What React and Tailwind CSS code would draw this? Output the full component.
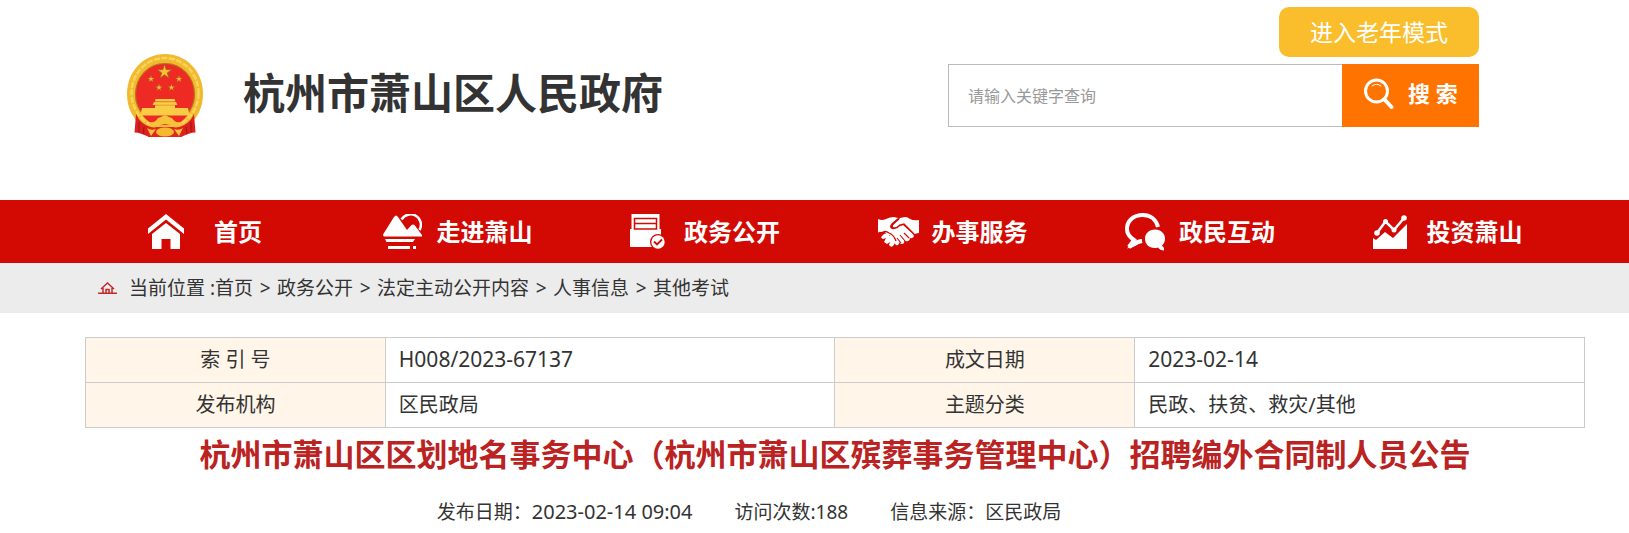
import React from "react";

const navItems = [
  { label: "首页", icon: HomeIcon },
  { label: "走进萧山", icon: MountainIcon },
  { label: "政务公开", icon: DocumentIcon },
  { label: "办事服务", icon: HandshakeIcon },
  { label: "政民互动", icon: ChatIcon },
  { label: "投资萧山", icon: ChartIcon },
];

const crumbs = ["首页", "政务公开", "法定主动公开内容", "人事信息", "其他考试"];

const infoRows = [
  ["索 引 号", "H008/2023-67137", "成文日期", "2023-02-14"],
  ["发布机构", "区民政局", "主题分类", "民政、扶贫、救灾/其他"],
];

function Star({ x, y, r }) {
  return (
    <path
      transform={`translate(${x} ${y}) scale(${r})`}
      d="M0-1 .23-.31H.95L.36.12.59.81 0 .38-.59.81-.36.12-.95-.31H-.23Z"
      fill="#f3c034"
      stroke="#a8641c"
      strokeWidth="0.1"
    />
  );
}

function Emblem() {
  return (
    <svg className="h-[83px] w-[76px] shrink-0" viewBox="0 0 76 83" aria-hidden="true">
      <path d="M38 0C59 0 76 17 76 40c0 13-5 23-13 30-7 6-15 8-25 8s-18-2-25-8C5 63 0 53 0 40 0 17 17 0 38 0Z" fill="#f0b92e" />
      <ellipse cx="38" cy="39" rx="33.5" ry="35" fill="none" stroke="#f9d458" strokeWidth="2.500" strokeDasharray="6 1.500" />
      <path d="M38 9.500c17 0 29.500 14 29.500 31S54 70 38 70 8.500 57.500 8.500 40.500 21 9.500 38 9.500Z" fill="#ee2a25" stroke="#b8741e" strokeWidth="1.200" />
      <Star x={37.500} y={18} r={7.500} />
      <Star x={24} y={25} r={3.600} />
      <Star x={52} y={25} r={3.600} />
      <Star x={32} y={33.500} r={3.600} />
      <Star x={44.500} y={33.500} r={3.600} />
      {/* gate tower and its wall */}
      <path d="M28.500 45h19l1 2.500H28ZM27 48h22l1.500 3H48v3h13l1 5H14l1-5h13v-3h-2.500Z" fill="#f9cc45" />
      <path d="M28 47.800h20M28 51.200h20" stroke="#e0942b" strokeWidth="0.800" />
      <path d="M12 60.500h52l-4 4H16Z" fill="#f9cc45" />
      <path d="M15 61c5 6 10 9 15 10h16c5-1 10-4 15-10l-5-1H20Z" fill="#ee2a25" />
      <path d="M14 59h48v2.500H14Z" fill="#f9cc45" />
      {/* red drapes over the wreath */}
      <path d="M9 60c4 8 8 11 15 13l-3 9.500c-5-2-9-4-13.500-4ZM67 60c-4 8-8 11-15 13l3 9.500c5-2 9-4 13.500-4Z" fill="#dc2020" />
      <path d="M12 68v10M17 73l-1 7M64 68v10M59 73l1 7" stroke="#a91616" strokeWidth="1.200" />
      <path d="M21 73h34v10H21Z" fill="#e3241f" />
      <path d="M22 68c5 1 7-1 9-4l3-1 4-2 4 2 3 1c2 3 4 5 9 4l-2 5c-4 1-7 0-9-2l-5-1-5 1c-2 2-5 3-9 2Z" fill="#f5c23a" />
      <ellipse cx="38" cy="78" rx="9" ry="4.500" fill="#f5b82e" />
      <path d="M20 74c3 2 6 2 9 1l-5 7ZM56 74c-3 2-6 2-9 1l5 7Z" fill="#f5c23a" />
    </svg>
  );
}

function SearchIcon() {
  return (
    <svg className="h-[31px] w-[30px] shrink-0" viewBox="0 0 30 31" fill="none" stroke="#fff" strokeLinecap="round" aria-hidden="true">
      <circle cx="12.500" cy="13" r="11" strokeWidth="3" />
      <path d="M8 8q4.500-3.500 9 0" strokeWidth="1" />
      <path d="m20.500 21.500 7 7.500" strokeWidth="4" />
    </svg>
  );
}

function HomeIcon() {
  return (
    <svg className="h-[35px] w-9" viewBox="0 0 36 35" fill="#fff" aria-hidden="true">
      <path d="m18 0 18 14.500V20L18 5.500 0 20v-5.500Z" />
      <path d="m18 9 14 11v15h-9.500V25h-9v10H4V20Z" />
    </svg>
  );
}

function MountainIcon() {
  return (
    <svg className="h-[35px] w-[39px]" viewBox="0 0 39 35" fill="#fff" aria-hidden="true">
      <path d="M18.500 5.500A10.300 10.300 0 1 1 36.500 16" fill="none" stroke="#fff" strokeWidth="2.500" />
      <path d="M0 20.500 11 3q2-3 4 0l9 13 4.500-5q1.500-1 3 0l7.500 10v1.500H1Q0 22.500 0 20.500Z" />
      <path d="M2 25h30l-2 3H3.500ZM5 32h22v3H5ZM30 32h3v3h-3Z" />
    </svg>
  );
}

function DocumentIcon() {
  return (
    <svg className="h-[35px] w-[35px]" viewBox="0 0 35 35" aria-hidden="true">
      <path d="M1.500 0h28v15H31v18H0V15h1.500Z" fill="#fff" />
      <path d="M4.500 15V4.500h22V15ZM4.500 9.500h22" fill="none" stroke="#d20a03" strokeWidth="1.500" />
      <circle cx="28" cy="28" r="8" fill="#d20a03" />
      <circle cx="28" cy="28" r="6.700" fill="#fff" />
      <path d="m24 27.500 3 3 5-5" fill="none" stroke="#d20a03" strokeWidth="1.800" />
    </svg>
  );
}

function HandshakeIcon() {
  return (
    <svg className="h-[30px] w-[41px]" viewBox="0 0 41 30" fill="#fff" aria-hidden="true">
      <path d="M0 2q4 2 8 0 4-2 8-2l4 1-6 5q-4 4 0 6 4 1 8-3l3-1 10 9q2 3-1 4-2 1-3-1 2 3-1 4-2 1-4-1 1 4-2 4-2 0-3-2 0 4-3 3l-4-5q-1-5-5-6-2-3-6-2-2-1-3 1l-4-1Z" />
      <path d="m22 1 5-1q3 0 5 2 4 2 9 1v13l-5 1L26 7q-3 0-5 2-4 3-6 1-1-1 1-3Z" />
      <path d="m6 17 3-1q3 0 2 3 4-1 3 3 4 0 3 4l-2 3q-2 2-4-1l1-3-3 2-3-2 2-4-3 1q-3-1-1-3Z" />
      <path d="m22 18 5 6M26 16l5 5M19 21l4 5" fill="none" stroke="#d20a03" strokeWidth="1.100" />
      <path d="M4 16q3-3 7 0 5 2 7 8" fill="none" stroke="#d20a03" strokeWidth="1.300" />
      <path d="m21 2-6 5q-3 3 0 4t7-3l4-1 10 10" fill="none" stroke="#d20a03" strokeWidth="1.300" />
    </svg>
  );
}

function ChatIcon() {
  return (
    <svg className="h-[38px] w-10" viewBox="0 0 40 38" aria-hidden="true">
      <path d="M33 14C31 6 25 2 18 2 8 2 2 8 2 16c0 6 4 9 7 11l-5 7 9-5 4-1" fill="none" stroke="#fff" strokeWidth="4" />
      <path d="M2 35.500 9 28l8-2v3l-7 4Z" fill="#fff" />
      <path d="M30 16.500c6 0 10 4 10 9 0 3-1 5-3 7l2 2.500v2.500q-4 0-6-3c-7 2-13-2-13-9 0-5 4-9 10-9Z" fill="#fff" />
    </svg>
  );
}

function ChartIcon() {
  return (
    <svg className="h-[34px] w-[34px]" viewBox="0 0 34 34" fill="#fff" aria-hidden="true">
      <path d="M4 18 12.500 6.500 21 15 31 3" fill="none" stroke="#fff" strokeWidth="2.500" />
      <circle cx="4" cy="18" r="2.800" />
      <circle cx="12.500" cy="6.500" r="2.500" />
      <circle cx="21" cy="15" r="2.500" />
      <circle cx="31" cy="3" r="2.800" />
      <path d="m0 23 3 2 9-8 8 6L34 9v25H0Z" />
    </svg>
  );
}

function CrumbHomeIcon() {
  return (
    <svg className="h-3 w-[19px]" viewBox="0 0 19 12" fill="none" stroke="#c22a2a" strokeWidth="1.500" aria-hidden="true">
      <path d="M0 11.300h19M3 7l6.500-6L16 7M5 6v5M14 6v5M8 11V7.500h3V11" />
    </svg>
  );
}

function Header() {
  return (
    <header className="flex h-[200px] justify-between pl-[127px] pr-[150px]">
      <div className="flex items-start gap-10 pt-[54px]">
        <Emblem />
        <span className="pt-[9px] text-[42px] leading-[60px] font-bold whitespace-nowrap text-[#333]">
          杭州市萧山区人民政府
        </span>
      </div>
      <div className="flex w-[531px] flex-col items-end gap-[7px] pt-[7px]">
        <button type="button" className="h-[50px] w-[200px] rounded-[10px] bg-[#fabe2d] text-[23px] text-white">
          进入老年模式
        </button>
        <form className="flex h-[63px] w-full" onSubmit={(e) => e.preventDefault()}>
          <input
            type="text"
            aria-label="请输入关键字查询"
            placeholder="请输入关键字查询"
            className="min-w-0 flex-1 border border-r-0 border-[#bbb] px-[19px] text-base placeholder:text-[#999]"
          />
          <button type="submit" className="flex w-[137px] items-center gap-3.5 bg-[#ff7300] pb-1 pl-[22px] text-[22px] font-bold text-white">
            <SearchIcon />
            搜 索
          </button>
        </form>
      </div>
    </header>
  );
}

function MainNav() {
  return (
    <nav className="bg-[#d20a03] pr-[30px] pl-[114px]">
      <ul className="grid grid-cols-6">
        {navItems.map(({ label, icon: Icon }, i) => (
          <li key={label}>
            <a
              href="#"
              className={`flex h-[63px] items-center text-2xl font-bold whitespace-nowrap text-white ${
                i === 0 ? "gap-6 pl-[34px]" : "gap-3 pl-[21px]"
              }`}
            >
              <span className="w-[42px]">
                <Icon />
              </span>
              {label}
            </a>
          </li>
        ))}
      </ul>
    </nav>
  );
}

function Breadcrumb() {
  return (
    <nav className="flex h-[50px] items-center gap-3 bg-[#ececec] pl-[98px] text-[19px] text-[#333]" aria-label="当前位置">
      <CrumbHomeIcon />
      <div className="flex whitespace-nowrap">
        <span className="whitespace-pre">当前位置 :</span>
        <ol className="flex">
          {crumbs.map((crumb, i) => (
            <li key={crumb} className="flex">
              {i > 0 && <span className="w-6 text-center">&gt;</span>}
              <a href="#">{crumb}</a>
            </li>
          ))}
        </ol>
      </div>
    </nav>
  );
}

function InfoTable() {
  return (
    <table className="w-full table-fixed border-collapse text-xl text-[#333]">
      <colgroup>
        <col className="w-[20%]" />
        <col className="w-[30%]" />
        <col className="w-[20%]" />
        <col className="w-[30%]" />
      </colgroup>
      <tbody>
        {infoRows.map((row, r) => (
          <tr key={row[0]} className="h-[45px]">
            {row.map((cell, i) =>
              i % 2 === 0 ? (
                <th key={i} scope="row" className="border border-[#ccc] bg-[#fff5e8] font-normal">
                  {cell}
                </th>
              ) : (
                <td key={i} className={`border border-[#ccc] px-[13px] ${r === 0 ? "text-[21px]" : ""}`}>
                  {cell}
                </td>
              )
            )}
          </tr>
        ))}
      </tbody>
    </table>
  );
}

export default function App() {
  return (
    <div className="bg-white font-['Noto_Sans','Noto_Sans_CJK_SC',sans-serif]">
      <Header />
      <MainNav />
      <Breadcrumb />
      <main className="pt-6 pr-11 pl-[85px]">
        <InfoTable />
        <h1 className="text-center text-[31px] leading-[52px] font-bold whitespace-nowrap text-[#b22]">
          杭州市萧山区区划地名事务中心（杭州市萧山区殡葬事务管理中心）招聘编外合同制人员公告
        </h1>
        <div className="flex justify-center gap-[42px] pt-4 pr-[172px] text-[19px] leading-8 whitespace-nowrap text-[#333]">
          <span>
            发布日期：<time className="text-xl">2023-02-14 09:04</time>
          </span>
          <span>访问次数:188</span>
          <span>信息来源：区民政局</span>
        </div>
      </main>
    </div>
  );
}
